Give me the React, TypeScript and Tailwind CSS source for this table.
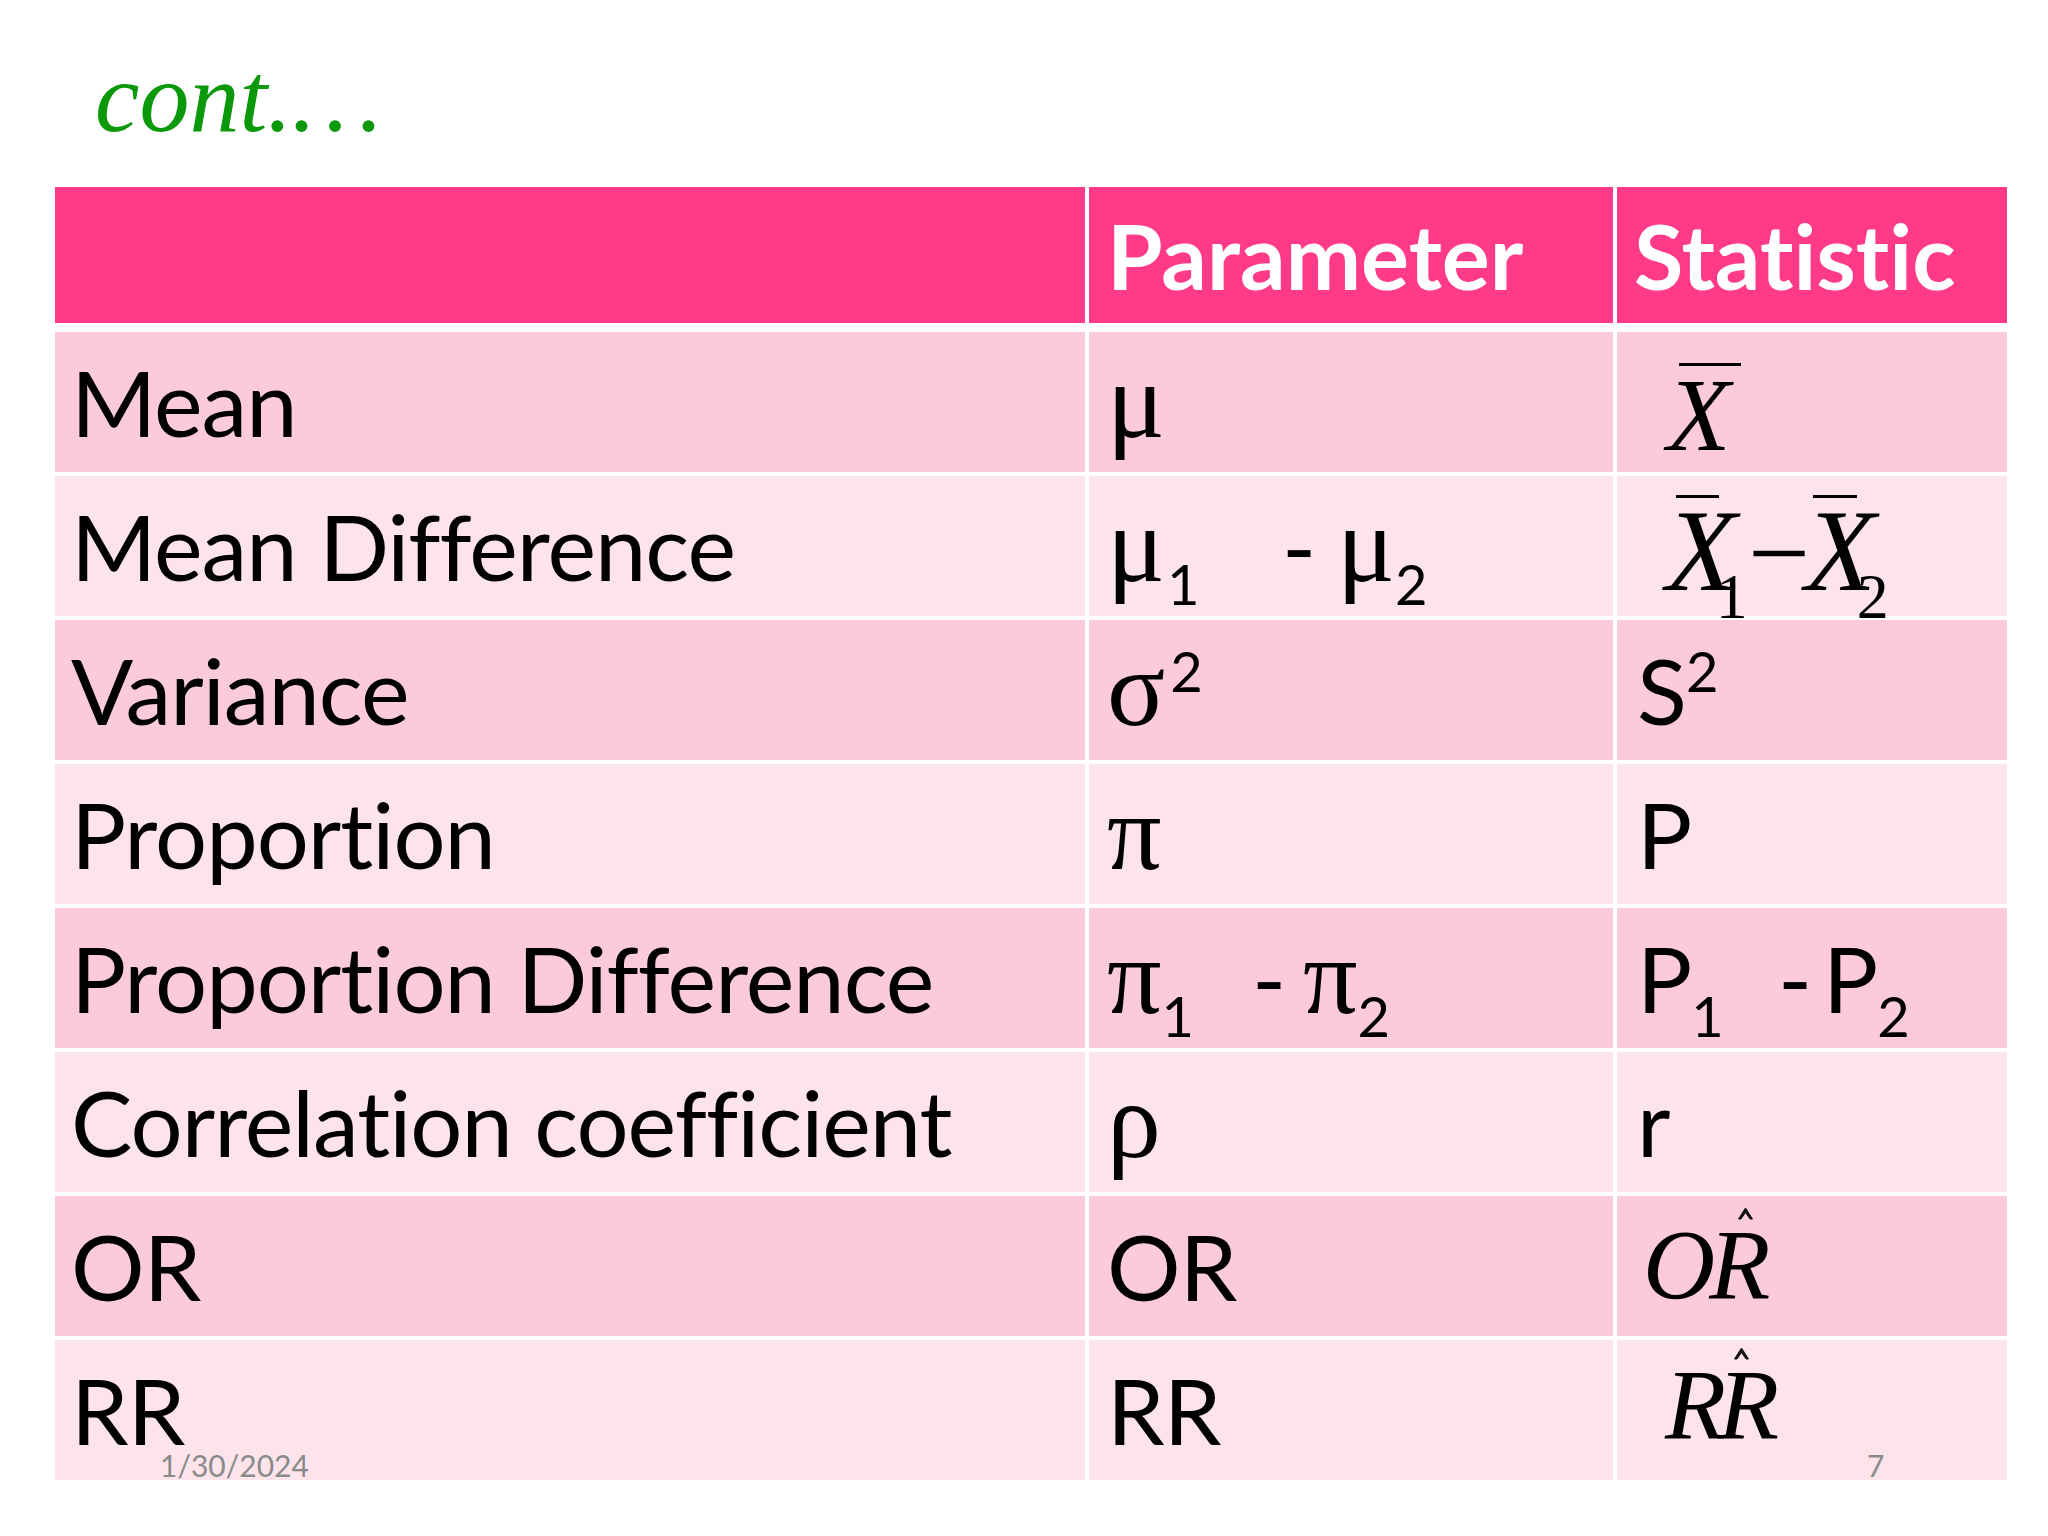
import type { ReactNode } from 'react'

function Greek({ children }: { children: ReactNode }) {
  return <span className="font-['Liberation_Serif',serif] text-[108px] leading-none tracking-normal">{children}</span>
}

function Sub({ children, className = '' }: { children: ReactNode; className?: string }) {
  return <span className={`text-[56px] leading-none align-[-24px] ${className}`}>{children}</span>
}

function Sup({ children, className = '' }: { children: ReactNode; className?: string }) {
  return <span className={`text-[56px] leading-none align-[33px] ${className}`}>{children}</span>
}

function Hat({ className }: { className: string }) {
  return (
    <svg className={`absolute -top-[9px] ${className}`} width="17" height="14" viewBox="0 0 17 14">
      <path d="M1.5 13 L8.5 2 L15.5 13 L13 13 L8.5 6.5 L4 13 Z" fill="#111" stroke="#111" strokeWidth="1" strokeLinejoin="round" />
    </svg>
  )
}

function XBar({ bar }: { bar: string }) {
  return (
    <span className="relative inline-block leading-none">
      X
      <span className={`absolute h-[3px] bg-black ${bar}`} />
    </span>
  )
}

const rows: { label: string; param: ReactNode; stat: ReactNode }[] = [
  {
    label: 'Mean',
    param: <Greek>μ</Greek>,
    stat: (
      <span className="ml-[30px] inline-block align-[-13px] font-['Liberation_Serif',serif] text-[104px] italic leading-none tracking-normal">
        <XBar bar="left-[12px] top-0 w-[62px]" />
      </span>
    ),
  },
  {
    label: 'Mean Difference',
    param: (
      <>
        <span className="inline-block w-[175px]">
          <Greek>μ</Greek>
          <Sub className="ml-[2px]">1</Sub>
        </span>
        <span className="inline-block w-[55px]">-</span>
        <Greek>μ</Greek>
        <Sub>2</Sub>
      </>
    ),
    stat: (
      <span className="ml-[29px] inline-block align-[-9px] font-['Liberation_Serif',serif] text-[116px] italic leading-none tracking-normal">
        <XBar bar="left-[10px] top-[2px] w-[43px]" />
        <span className="ml-[-21px] text-[64px] not-italic align-[-28px]">1</span>
        <span className="text-[110px] not-italic">−</span>
        <span className="ml-[-5px]">
          <XBar bar="left-[8px] top-[2px] w-[44px]" />
        </span>
        <span className="ml-[-19px] text-[64px] not-italic align-[-28px]">2</span>
      </span>
    ),
  },
  {
    label: 'Variance',
    param: (
      <>
        <Greek>σ</Greek>
        <Sup className="ml-[5px]">2</Sup>
      </>
    ),
    stat: (
      <>
        S<Sup>2</Sup>
      </>
    ),
  },
  { label: 'Proportion', param: <Greek>π</Greek>, stat: 'P' },
  {
    label: 'Proportion Difference',
    param: (
      <>
        <span className="inline-block w-[145px]">
          <Greek>π</Greek>
          <Sub>1</Sub>
        </span>
        <span className="inline-block w-[51px]">-</span>
        <Greek>π</Greek>
        <Sub>2</Sub>
      </>
    ),
    stat: (
      <>
        <span className="inline-block w-[141px]">
          P<Sub>1</Sub>
        </span>
        <span className="inline-block w-[45px]">-</span>P<Sub>2</Sub>
      </>
    ),
  },
  { label: 'Correlation coefficient', param: <Greek>ρ</Greek>, stat: 'r' },
  {
    label: 'OR',
    param: 'OR',
    stat: (
      <span className="ml-[6px] inline-block align-[3px] font-['Liberation_Serif',serif] text-[100px] italic leading-none tracking-[-6px]">
        O
        <span className="relative inline-block">
          R<Hat className="left-[28px]" />
        </span>
      </span>
    ),
  },
  {
    label: 'RR',
    param: 'RR',
    stat: (
      <span className="ml-[28px] inline-block align-[7px] font-['Liberation_Serif',serif] text-[100px] italic leading-none tracking-[-8px]">
        R
        <span className="relative inline-block">
          R<Hat className="left-[15px]" />
        </span>
      </span>
    ),
  },
]

export default function App() {
  return (
    <div className="relative h-[1536px] w-[2048px] overflow-hidden bg-white font-['Lato',sans-serif] text-black [font-variant-ligatures:none]">
      <div className="pl-[95px] pt-[48px] font-['Liberation_Serif',serif] text-[100px] italic leading-none text-[#0b990b]">
        cont.…
      </div>

      <div className="ml-[55px] mt-[39px] w-[1952px]">
        <div className="grid h-[136px] grid-cols-[1030px_524px_390px] gap-x-[4px] text-[90px] font-bold leading-[136px] text-white">
          <div className="bg-[#fe3a89]" />
          <div className="bg-[#fe3a89] pl-[18px]">Parameter</div>
          <div className="bg-[#fe3a89] pl-[17px]">Statistic</div>
        </div>

        <div className="mt-[9px] grid grid-cols-[1030px_524px_390px] gap-[4px] text-[92px] leading-[140px] tracking-[-1px]">
          {rows.map((row, i) => {
            const bg = i % 2 === 0 ? 'bg-[#fccbda]' : 'bg-[#fde4eb]'
            return (
              <div key={row.label} className="contents">
                <div className={`h-[140px] whitespace-nowrap pl-[16px] ${bg}`}>{row.label}</div>
                <div className={`h-[140px] whitespace-nowrap pl-[18px] ${bg}`}>{row.param}</div>
                <div className={`h-[140px] whitespace-nowrap pl-[20px] ${bg}`}>{row.stat}</div>
              </div>
            )
          })}
        </div>
      </div>

      <div className="absolute left-[160px] top-[1450px] text-[30px] leading-none text-[#8a8a8a]">1/30/2024</div>
      <div className="absolute left-[1867px] top-[1450px] text-[30px] leading-none text-[#8a8a8a]">7</div>
    </div>
  )
}
